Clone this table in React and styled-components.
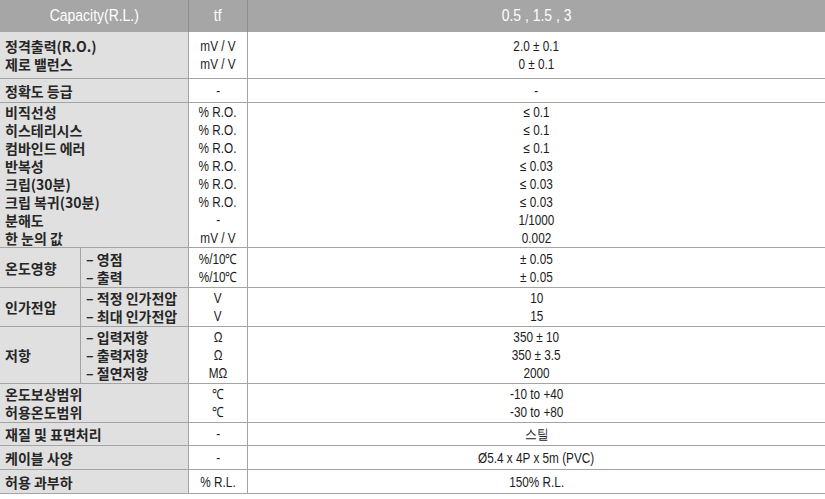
import React from 'react';
import styled, { createGlobalStyle } from 'styled-components';

const GlobalStyle = createGlobalStyle`
  body {
    margin: 0;
    background: #ffffff;
  }
`;

const LINE = '#a4a4a4';

const Table = styled.div`
  width: 825px;
  display: flex;
  flex-direction: column;
  font-family: 'Liberation Sans', Arial, sans-serif;
  color: #1c1c1c;
`;

const Row = styled.div`
  display: grid;
  grid-template-columns: ${p => (p.split ? '81px 108px 59px 1fr' : '189px 59px 1fr')};
  height: ${p => p.h}px;
  box-sizing: border-box;
  border-bottom: 1px solid ${LINE};
`;

const HeadRow = styled.div`
  display: grid;
  grid-template-columns: 189px 59px 1fr;
  height: 32px;
  background: #a6a6a6;
  color: #fff;
`;

const HeadCell = styled.div`
  display: flex;
  align-items: center;
  justify-content: center;
  font-size: 17px;
  border-right: ${p => (p.last ? 'none' : '1px solid #8e8e8e')};
`;

// narrow latin text, like the condensed face of the original sheet
const Narrow = styled.span`
  display: inline-block;
  transform: scaleX(${p => p.sx || 0.84});
  white-space: nowrap;
`;

const Label = styled.div`
  background: #e0e0e0;
  border-right: 1px solid ${LINE};
  display: flex;
  flex-direction: column;
  justify-content: center;
  padding-left: 5px;
  font-family: 'Noto Sans CJK KR', sans-serif;
  font-weight: 700;
  font-size: 14px;
  color: #262626;
`;

const Cell = styled.div`
  display: flex;
  flex-direction: column;
  justify-content: center;
  align-items: center;
  font-size: 14px;
  border-right: ${p => (p.last ? 'none' : `1px solid ${LINE}`)};
`;

const Line = styled.div`
  line-height: 18px;
  height: 18px;
  white-space: nowrap;
`;

const Lines = ({ items, narrow }) =>
  items.map((t, i) => <Line key={i}>{narrow ? <Narrow>{t}</Narrow> : t}</Line>);

const rows = [
  { h: 47, label: ['정격출력(R.O.)', '제로 밸런스'], unit: ['mV / V', 'mV / V'], value: ['2.0 ± 0.1', '0 ± 0.1'] },
  { h: 24, label: ['정확도 등급'], unit: ['-'], value: ['-'] },
  {
    h: 145,
    label: ['비직선성', '히스테리시스', '컴바인드 에러', '반복성', '크립(30분)', '크립 복귀(30분)', '분해도', '한 눈의 값'],
    unit: ['% R.O.', '% R.O.', '% R.O.', '% R.O.', '% R.O.', '% R.O.', '-', 'mV / V'],
    value: ['≤ 0.1', '≤ 0.1', '≤ 0.1', '≤ 0.03', '≤ 0.03', '≤ 0.03', '1/1000', '0.002'],
  },
  { h: 40, group: '온도영향', label: ['– 영점', '– 출력'], unit: ['%/10℃', '%/10℃'], value: ['± 0.05', '± 0.05'] },
  { h: 39, group: '인가전압', label: ['– 적정 인가전압', '– 최대 인가전압'], unit: ['V', 'V'], value: ['10', '15'] },
  { h: 57, group: '저항', label: ['– 입력저항', '– 출력저항', '– 절연저항'], unit: ['Ω', 'Ω', 'MΩ'], value: ['350 ± 10', '350 ± 3.5', '2000'] },
  { h: 39, label: ['온도보상범위', '허용온도범위'], unit: ['℃', '℃'], value: ['-10 to +40', '-30 to +80'] },
  { h: 23, label: ['재질 및 표면처리'], unit: ['-'], value: ['스틸'] },
  { h: 24, label: ['케이블 사양'], unit: ['-'], value: ['Ø5.4 x 4P x 5m (PVC)'] },
  { h: 24, label: ['허용 과부하'], unit: ['% R.L.'], value: ['150% R.L.'] },
];

export default function App() {
  return (
    <>
      <GlobalStyle />
      <Table>
        <HeadRow>
          <HeadCell>
            <Narrow sx={0.82}>Capacity(R.L.)</Narrow>
          </HeadCell>
          <HeadCell>
            <Narrow sx={0.82}>tf</Narrow>
          </HeadCell>
          <HeadCell last>
            <Narrow sx={0.82}>0.5 , 1.5 , 3</Narrow>
          </HeadCell>
        </HeadRow>
        {rows.map((r, i) => (
          <Row key={i} h={r.h} split={!!r.group}>
            {r.group && (
              <Label>
                <Line>{r.group}</Line>
              </Label>
            )}
            <Label>
              <Lines items={r.label} />
            </Label>
            <Cell>
              <Lines items={r.unit} narrow />
            </Cell>
            <Cell last>
              <Lines items={r.value} narrow />
            </Cell>
          </Row>
        ))}
      </Table>
    </>
  );
}
